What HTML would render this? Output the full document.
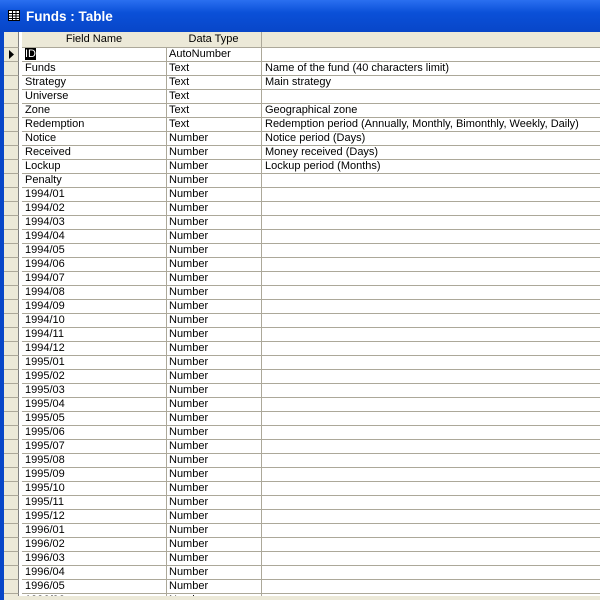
<!DOCTYPE html><html><head><style>
body{margin:0;width:600px;height:600px;overflow:hidden;background:#ece9d8;font-family:"Liberation Sans",sans-serif;font-size:11px;position:relative}
#title{position:absolute;left:0;top:0;width:600px;height:32px;background:linear-gradient(#2a6ff0,#0a50d8 40%,#0846c8);color:#fff;font-weight:bold;font-size:13.5px}
#title span{position:absolute;left:26px;top:9px}
#lb{position:absolute;left:0;top:32px;width:4px;height:568px;background:#0846c8}
#grid{position:absolute;left:4px;top:32px;width:596px;height:564px;overflow:hidden;background:#fff}
.r{position:absolute;left:0;height:14px;width:596px}
.c{position:absolute;top:0;height:13px;border-right:1px solid #aca899;border-bottom:1px solid #aca899;line-height:13px;padding-left:3px;white-space:nowrap;overflow:hidden;box-sizing:content-box}
.s{left:0;width:14px;padding:0;background:#ece9d8;border-right:1px solid #808080}
.f{left:18px;width:141px}.d{left:162px;width:92px}.e{left:258px;width:338px;border-right:none}
.h{height:16px}.h .c{height:15px;line-height:15px;background:#ece9d8;text-align:center;padding:0}
.h .f{width:144px}.h .d{width:95px}.h .e{width:338px}
#bot{position:absolute;left:4px;top:596px;width:596px;height:4px;background:#ece9d8}
</style></head><body>
<div id="title"><svg style="position:absolute;left:8px;top:10px" width="12" height="11"><rect x=".5" y=".5" width="11" height="10" fill="#fff" stroke="#000"/><path d="M1 3.5h10M1 6h10M1 8.5h10M4.5 1v9M8 1v9" stroke="#000" stroke-width="1"/></svg><span>Funds : Table</span></div>
<div id="lb"></div>
<div id="grid">
<div class="r h" style="top:0"><div class="c s"></div><div class="c f">Field Name</div><div class="c d">Data Type</div><div class="c e"></div></div>
<div id="rows"></div>
</div>
<div id="bot"></div>
<script>
var rows=[["ID","AutoNumber",""],["Funds","Text","Name of the fund (40 characters limit)"],["Strategy","Text","Main strategy"],["Universe","Text",""],["Zone","Text","Geographical zone"],["Redemption","Text","Redemption period (Annually, Monthly, Bimonthly, Weekly, Daily)"],["Notice","Number","Notice period (Days)"],["Received","Number","Money received (Days)"],["Lockup","Number","Lockup period (Months)"],["Penalty","Number",""]];
for(var y=1994;y<=1996;y++)for(var m=1;m<=12;m++)rows.push([y+"/"+(m<10?"0":"")+m,"Number",""]);
var h="";rows.slice(0,41).forEach(function(r,i){
var sel=i==0?'<svg width="14" height="13"><path d="M5 2v9l5-4.5z" fill="#000"/></svg>':'';
var f=i==0?'<span style="background:#000;color:#fff">ID</span>':r[0];
h+='<div class="r" style="top:'+(16+14*i)+'px"><div class="c s">'+sel+'</div><div class="c f">'+f+'</div><div class="c d">'+r[1]+'</div><div class="c e">'+r[2]+'</div></div>';});
document.getElementById("rows").innerHTML=h;
</script>
</body></html>
